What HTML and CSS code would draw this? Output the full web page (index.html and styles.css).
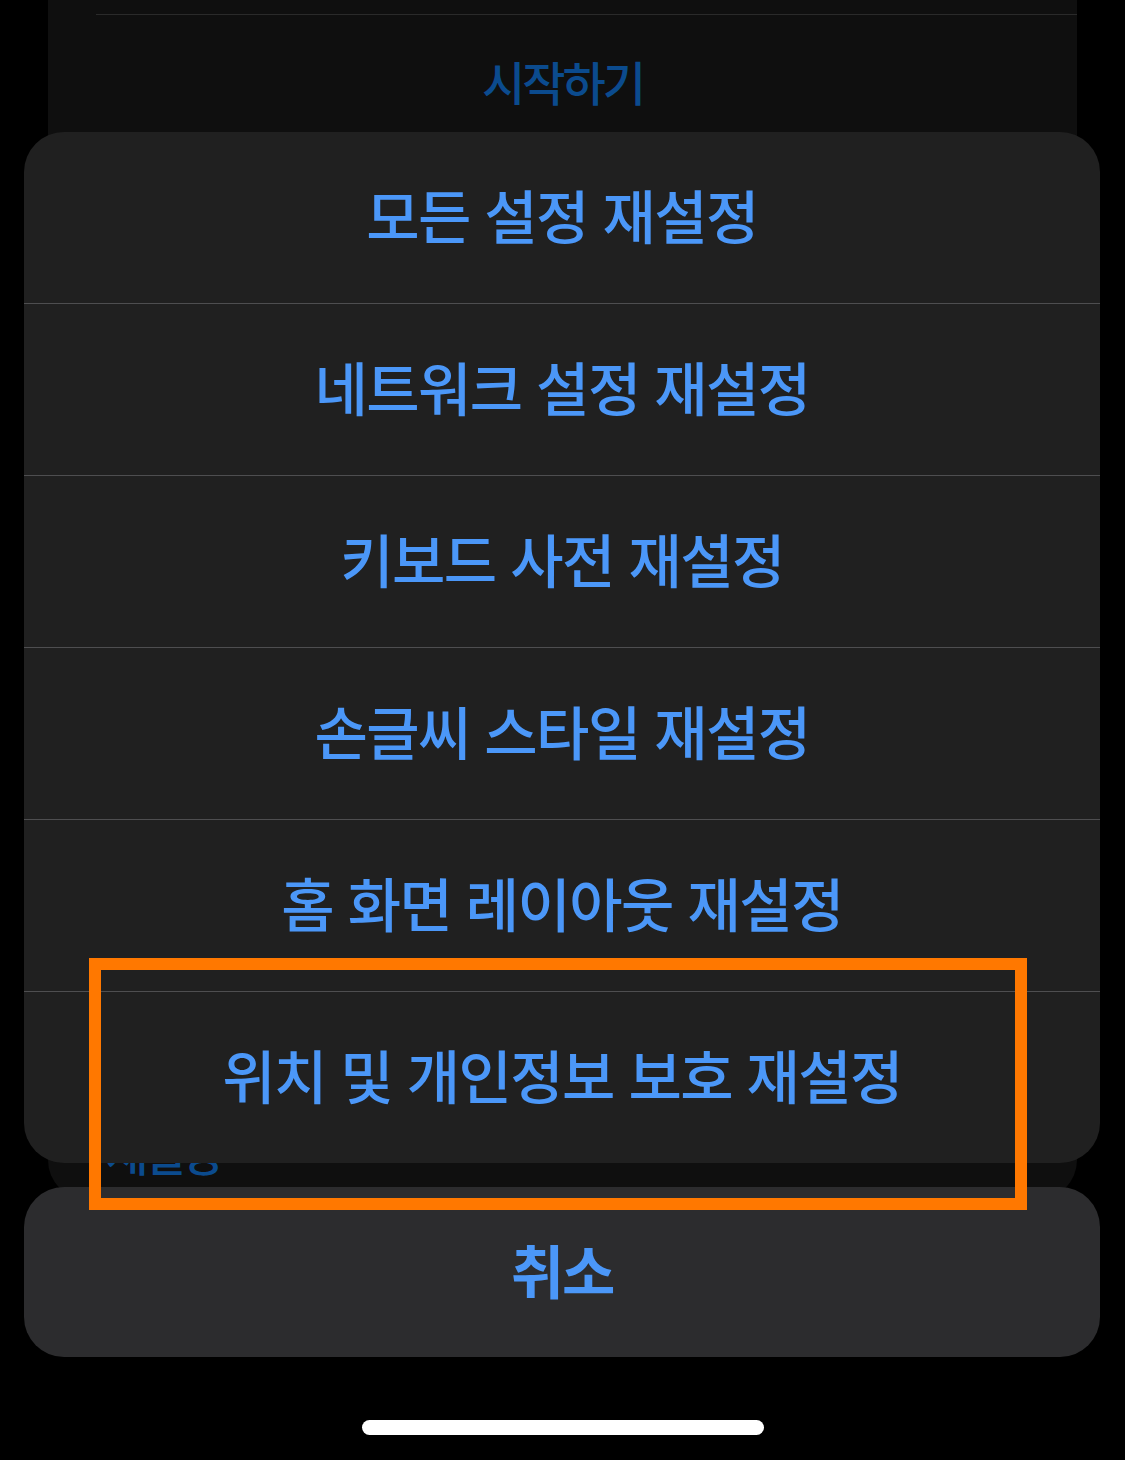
FILE: index.html
```
<!DOCTYPE html>
<html lang="ko">
<head>
<meta charset="utf-8">
<link rel="stylesheet" href="styles.css">
</head>
<body>
<div class="screen">
  <div class="bg-card">
    <div class="bg-sep"></div>
    <div class="bg-start">시작하기</div>
    <div class="bg-reset">재설정</div>
  </div>
  <div class="overlay">
    <div class="sheet">
      <div class="row">모든 설정 재설정</div>
      <div class="row">네트워크 설정 재설정</div>
      <div class="row">키보드 사전 재설정</div>
      <div class="row">손글씨 스타일 재설정</div>
      <div class="row">홈 화면 레이아웃 재설정</div>
      <div class="row">위치 및 개인정보 보호 재설정</div>
    </div>
    <div class="cancel">취소</div>
  </div>
  <div class="home"></div>
  <div class="highlight"></div>
</div>
</body>
</html>
```
FILE: styles.css
```
html, body {
  margin: 0;
  padding: 0;
  background: #000;
}
.screen {
  position: relative;
  width: 1125px;
  height: 1460px;
  overflow: hidden;
  background: #000;
  font-family: "Noto Sans CJK KR", "Noto Sans", sans-serif;
}
.bg-card {
  margin: 0 48px;
  height: 1200px;
  background: #0f0f0f;
  border-radius: 0 0 40px 40px;
  display: flex;
  flex-direction: column;
}
.bg-sep {
  margin: 14px 0 0 48px;
  height: 1px;
  background: #2a2a2a;
}
.bg-start {
  height: 130px;
  display: flex;
  align-items: center;
  justify-content: center;
  color: #0b4b8e;
  font-size: 47px;
  font-weight: 500;
  letter-spacing: -3px;
}
.bg-reset {
  margin-top: 978px;
  padding-left: 58px;
  color: #0b4b8e;
  font-size: 46px;
  font-weight: 500;
  line-height: 56px;
  letter-spacing: -5px;
}
.overlay {
  position: absolute;
  top: 132px;
  left: 24px;
  right: 25px;
  display: flex;
  flex-direction: column;
  gap: 24px;
}
.sheet {
  background: #202020;
  border-radius: 40px;
  overflow: hidden;
  display: flex;
  flex-direction: column;
}
.row {
  height: 171px;
  box-sizing: border-box;
  padding-bottom: 8px;
  display: flex;
  align-items: center;
  justify-content: center;
  color: #4b97f8;
  font-size: 58px;
  font-weight: 500;
  letter-spacing: -1.6px;
}
.row + .row {
  height: 172px;
  border-top: 1px solid #4e4e50;
}
.cancel {
  height: 170px;
  box-sizing: border-box;
  padding-bottom: 6px;
  background: #2c2c2e;
  border-radius: 40px;
  display: flex;
  align-items: center;
  justify-content: center;
  color: #4b97f8;
  font-size: 58px;
  font-weight: 700;
  letter-spacing: -2px;
}
.home {
  position: absolute;
  left: 362px;
  top: 1420px;
  width: 402px;
  height: 15px;
  border-radius: 8px;
  background: #fff;
}
.highlight {
  position: absolute;
  left: 89px;
  top: 958px;
  width: 914px;
  height: 228px;
  border: 12px solid #ff7800;
}
```
